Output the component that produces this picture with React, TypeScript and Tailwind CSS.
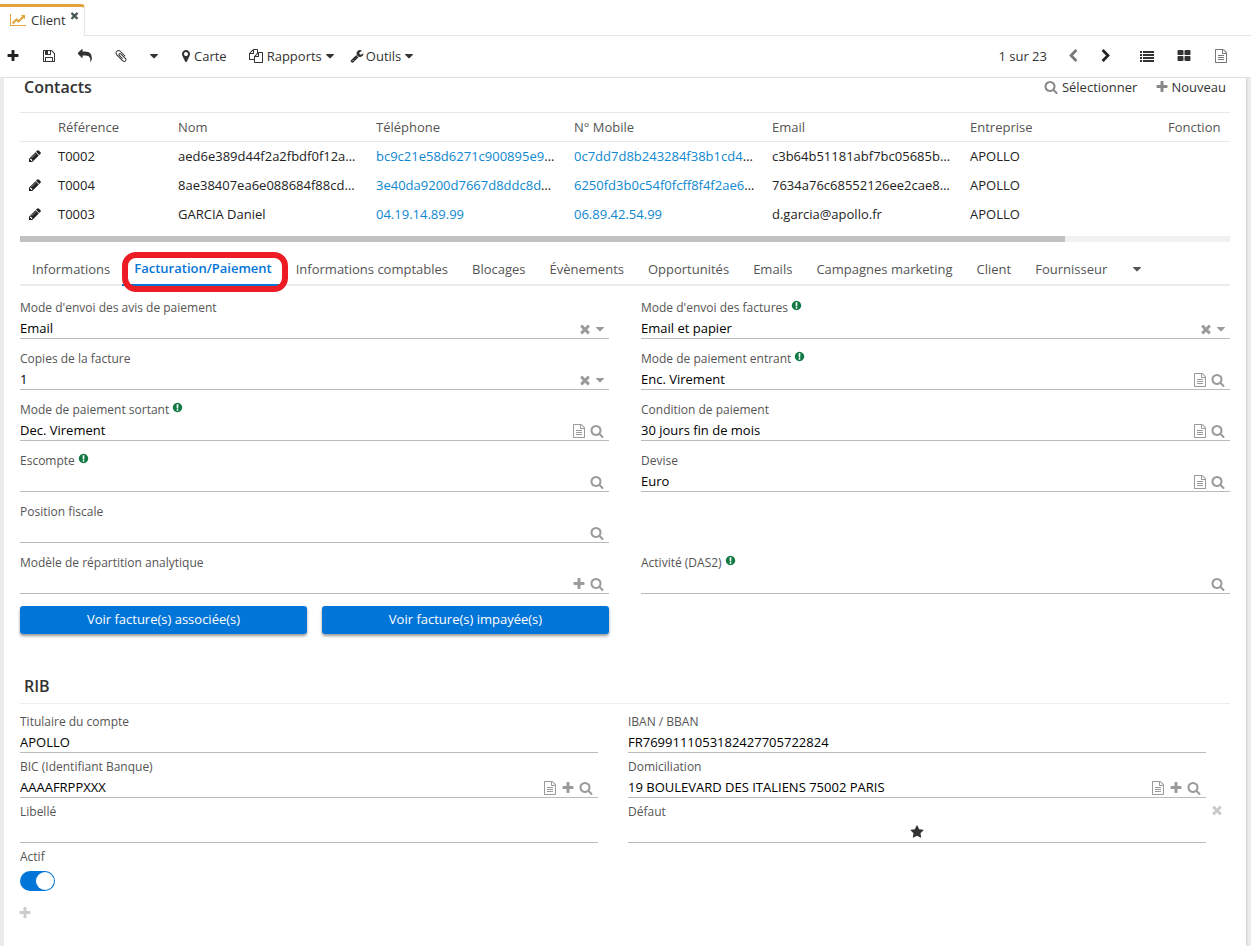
import { useId, useState } from "react"
import type { ReactNode } from "react"

// Font Awesome 4 glyphs: [viewBox, path]
const glyphs = {
    plus: ["0 0 1792 1792", "M1600 736v192q0 40-28 68t-68 28h-416v416q0 40-28 68t-68 28h-192q-40 0-68-28t-28-68v-416h-416q-40 0-68-28t-28-68v-192q0-40 28-68t68-28h416v-416q0-40 28-68t68-28h192q40 0 68 28t28 68v416h416q40 0 68 28t28 68z"],
    times: ["0 0 1792 1792", "M1490 1322q0 40-28 68l-136 136q-28 28-68 28t-68-28l-294-294-294 294q-28 28-68 28t-68-28l-136-136q-28-28-28-68t28-68l294-294-294-294q-28-28-28-68t28-68l136-136q28-28 68-28t68 28l294 294 294-294q28-28 68-28t68 28l136 136q28 28 28 68t-28 68l-294 294 294 294q28 28 28 68z"],
    search: ["0 0 1792 1792", "M1216 832q0-185-131.5-316.5t-316.5-131.5-316.5 131.5-131.5 316.5 131.5 316.5 316.5 131.5 316.5-131.5 131.5-316.5zm512 832q0 52-38 90t-90 38q-54 0-90-38l-343-342q-179 124-399 124-143 0-273.5-55.5t-225-150-150-225-55.5-273.5 55.5-273.5 150-225 225-150 273.5-55.5 273.5 55.5 225 150 150 225 55.5 273.5q0 220-124 399l343 343q37 37 37 90z"],
    caret: ["384 128 1024 1536", "M1408 704q0 26-19 45l-448 448q-19 19-45 19t-45-19l-448-448q-19-19-19-45t19-45 45-19h896q26 0 45 19t19 45z"],
    file: ["0 0 1792 1792", "M1596 380q28 28 48 76t20 88v1152q0 40-28 68t-68 28h-1344q-40 0-68-28t-28-68v-1600q0-40 28-68t68-28h896q40 0 88 20t76 48zm-444-244v376h376q-10-29-22-41l-313-313q-12-12-41-22zm384 1528v-1024h-416q-40 0-68-28t-28-68v-416h-768v1536h1280zm-1024-864q0-14 9-23t23-9h704q14 0 23 9t9 23v64q0 14-9 23t-23 9h-704q-14 0-23-9t-9-23v-64zm736 224q14 0 23 9t9 23v64q0 14-9 23t-23 9h-704q-14 0-23-9t-9-23v-64q0-14 9-23t23-9h704zm0 256q14 0 23 9t9 23v64q0 14-9 23t-23 9h-704q-14 0-23-9t-9-23v-64q0-14 9-23t23-9h704z"],
    info: ["0 0 1792 1792", "M896 128q209 0 385.5 103t279.5 279.5 103 385.5-103 385.5-279.5 279.5-385.5 103-385.5-103-279.5-279.5-103-385.5 103-385.5 279.5-279.5 385.5-103zm128 1247v-190q0-14-9-23.5t-22-9.5h-192q-13 0-23 10t-10 23v190q0 13 10 23t23 10h192q13 0 22-9.5t9-23.5zm-2-344l18-621q0-12-10-18-10-8-24-8h-220q-14 0-24 8-10 6-10 18l17 621q0 10 10 17.5t24 7.5h185q14 0 23.5-7.5t10.5-17.5z"],
    pencil: ["0 0 1792 1792", "M491 1536l91-91-235-235-91 91v107h128v128h107zm523-928q0-22-22-22-10 0-17 7l-542 542q-7 7-7 17 0 22 22 22 10 0 17-7l542-542q7-7 7-17zm-54-192l416 416-832 832h-416v-416zm683 96q0 53-37 90l-166 166-416-416 166-165q36-38 90-38 53 0 91 38l235 234q37 39 37 91z"],
    star: ["0 0 1792 1792", "M1728 647q0 22-26 48l-363 354 86 500q1 7 1 20 0 21-10.5 35.5t-30.5 14.5q-19 0-40-12l-449-236-449 236q-22 12-40 12-21 0-31.5-14.5t-10.5-35.5q0-6 2-20l86-500-364-354q-25-27-25-48 0-37 56-46l502-73 225-455q19-41 49-41t49 41l225 455 502 73q56 9 56 46z"],
    grid: ["0 0 1792 1792", "M832 1024v384q0 52-38 90t-90 38h-512q-52 0-90-38t-38-90v-384q0-52 38-90t90-38h512q52 0 90 38t38 90zm0-768v384q0 52-38 90t-90 38h-512q-52 0-90-38t-38-90v-384q0-52 38-90t90-38h512q52 0 90 38t38 90zm896 768v384q0 52-38 90t-90 38h-512q-52 0-90-38t-38-90v-384q0-52 38-90t90-38h512q52 0 90 38t38 90zm0-768v384q0 52-38 90t-90 38h-512q-52 0-90-38t-38-90v-384q0-52 38-90t90-38h512q52 0 90 38t38 90z"],
    list: ["0 0 1792 1792", "M0 256h256v256h-256zM0 640h256v256h-256zM0 1024h256v256h-256zM0 1408h256v256h-256zM384 256h1408v256h-1408zM384 640h1408v256h-1408zM384 1024h1408v256h-1408zM384 1408h1408v256h-1408z"],
    left: ["0 0 1792 1792", "M1427 301l-531 531 531 531q19 19 19 45t-19 45l-166 166q-19 19-45 19t-45-19l-742-742q-19-19-19-45t19-45l742-742q19-19 45-19t45 19l166 166q19 19 19 45t-19 45z"],
    right: ["0 0 1792 1792", "M1363 877l-742 742q-19 19-45 19t-45-19l-166-166q-19-19-19-45t19-45l531-531-531-531q-19-19-19-45t19-45l166-166q19-19 45-19t45 19l742 742q19 19 19 45t-19 45z"],
    marker: ["384 0 1024 1792", "M1152 640q0-106-75-181t-181-75-181 75-75 181 75 181 181 75 181-75 75-181zm256 0q0 109-33 179l-364 774q-16 33-47.5 52t-67.5 19-67.5-19-46.5-52l-365-774q-33-70-33-179 0-212 150-362t362-150 362 150 150 362z"],
    chart: ["-128 0 2048 1792", "M1920 1536v128h-2048v-1536h128v1408h1920zm-128-1248v435q0 21-19.5 29.5t-35.5-7.5l-121-121-633 633q-10 10-23 10t-23-10l-233-233-416 416-192-192 585-585q10-10 23-10t23 10l233 233 464-464-121-121q-16-16-7.5-35.5t29.5-19.5h435q14 0 23 9t9 23z"],
    clip: ["0 0 1792 1792", "M1596 1385q0 117-79 196t-196 79q-135 0-235-100l-777-776q-113-115-113-271 0-159 110-270t269-111q158 0 273 113l605 606q10 10 10 22 0 16-30.5 46.5t-46.5 30.5q-13 0-23-10l-606-607q-79-77-181-77-106 0-179 75t-73 181q0 105 76 181l776 777q63 63 145 63 64 0 106-42t42-106q0-82-63-145l-581-581q-26-24-60-24-29 0-48 19t-19 48q0 32 25 59l410 410q10 10 10 22 0 16-31 47t-47 31q-12 0-22-10l-410-410q-63-61-63-149 0-82 57-139t139-57q88 0 149 63l581 581q100 98 100 235z"],
    save: ["0 0 1792 1792", "M512 1536h768v-384h-768v384zm896 0h128v-896q0-14-10-38.5t-20-34.5l-281-281q-10-10-34-20t-39-10v416q0 40-28 68t-68 28h-576q-40 0-68-28t-28-68v-416h-128v1280h128v-416q0-40 28-68t68-28h832q40 0 68 28t28 68v416zm-384-928v-320q0-13-9.5-22.5t-22.5-9.5h-192q-13 0-22.5 9.5t-9.5 22.5v320q0 13 9.5 22.5t22.5 9.5h192q13 0 22.5-9.5t9.5-22.5zm640 32v928q0 40-28 68t-68 28h-1344q-40 0-68-28t-28-68v-1344q0-40 28-68t68-28h928q40 0 88 20t76 48l280 280q28 28 48 76t20 88z"],
    reply: ["0 0 1792 1792", "M1792 1120q0 166-127 451-3 7-10.5 24t-13.5 30-13 22q-12 17-28 17-15 0-23.5-10t-8.5-25q0-9 2.5-26.5t2.5-23.5q5-68 5-123 0-112-19.5-200.5t-54-153.5-88-113-116-79-143-47-164-26-184.5-7h-224v256q0 26-19 45t-45 19-45-19l-512-512q-19-19-19-45t19-45l512-512q19-19 45-19t45 19 19 45v256h224q713 0 875 403 53 134 53 333z"],
    wrench: ["0 0 1792 1792", "M448 1472q0-26-19-45t-45-19-45 19-19 45 19 45 45 19 45-19 19-45zm644-420l-682 682q-37 37-90 37-52 0-91-37l-106-108q-38-36-38-90 0-53 38-91l681-681q39 98 114.5 173.5t173.5 114.5zm634-435q0 39-23 106-47 134-164.5 217.5t-258.5 83.5q-185 0-316.5-131.5t-131.5-316.5 131.5-316.5 316.5-131.5q58 0 121.5 16.5t107.5 46.5q16 11 16 28t-16 28l-293 169v224l193 107q5-3 79-48.5t135.5-81 70.5-35.5q15 0 23.5 10t8.5 25z"],
    copy: ["0 0 1792 1792", "M1696 384q40 0 68 28t28 68v1216q0 40-28 68t-68 28h-960q-40 0-68-28t-28-68v-288h-544q-40 0-68-28t-28-68v-672q0-40 20-88t48-76l408-408q28-28 76-48t88-20h416q40 0 68 28t28 68v328q68-40 128-40h416zm-544 213l-299 299h299v-299zm-640-384l-299 299h299v-299zm196 647l316-316v-416h-384v416q0 40-28 68t-68 28h-416v640h512v-256q0-40 20-88t48-76zm956 804v-1152h-384v416q0 40-28 68t-68 28h-416v640h896z"],
}

type IconName = keyof typeof glyphs

const Icon = ({ name, className = "size-3.5" }: { name: IconName; className?: string }) => (
    <svg viewBox={glyphs[name][0]} fill="currentColor" aria-hidden="true" className={"shrink-0 " + className}>
        <path d={glyphs[name][1]} />
    </svg>
)

const Caret = () => <Icon name="caret" className="h-3 w-2" />

const IconButton = ({ name, label, className = "" }: { name: IconName; label: string; className?: string }) => (
    <button aria-label={label} className={"cursor-pointer " + className}>
        {name === "caret" ? <Caret /> : <Icon name={name} />}
    </button>
)

const actionLabels: Partial<Record<IconName, string>> = {
    times: "Effacer",
    caret: "Ouvrir la liste",
    file: "Voir",
    plus: "Créer",
    search: "Rechercher",
}

type FieldProps = {
    label: string
    value?: string
    help?: boolean
    select?: boolean
    actions?: IconName[]
    children?: ReactNode
}

const Field = ({ label, value = "", help, select, actions = [], children }: FieldProps) => {
    const id = useId()
    return (
        <div>
            <div className="flex h-5 items-center">
                <label htmlFor={id} className="text-xs leading-5 text-[#555]">{label}</label>
                {help && <span className="ml-[3px] pb-1.5 text-[#117a44]"><Icon name="info" className="size-[11px]" /></span>}
            </div>
            <div className="flex h-[21px] items-start border-b border-[#bbb] text-black">
                {children}
                {!children && select && (
                    <select id={id} defaultValue={value} className="min-w-0 flex-1 appearance-none leading-5 outline-0">
                        <option>{value}</option>
                    </select>
                )}
                {!children && !select && (
                    <input id={id} type="text" autoComplete="off" defaultValue={value} className="min-w-0 flex-1 leading-5 outline-0" />
                )}
                {actions.length > 0 && (
                    <div className="flex h-5 items-center gap-1 pt-0.5 pr-[5px] text-[#9b9b9b]">
                        {actions.map((name) => (
                            <IconButton key={name} name={name} label={actionLabels[name] ?? name} />
                        ))}
                    </div>
                )}
            </div>
        </div>
    )
}

type Contact = { ref: string; nom: string; tel: string; mobile: string; email: string; more?: string }

// long values are shortened, "more" is what follows them
const contacts: Contact[] = [
    { ref: "T0002", nom: "aed6e389d44f2a2fbdf0f12a", tel: "bc9c21e58d6271c900895e9", mobile: "0c7dd7d8b243284f38b1cd4", email: "c3b64b51181abf7bc05685b", more: "…" },
    { ref: "T0004", nom: "8ae38407ea6e088684f88cd", tel: "3e40da9200d7667d8ddc8d", mobile: "6250fd3b0c54f0fcff8f4f2ae6", email: "7634a76c68552126ee2cae8", more: "…" },
    { ref: "T0003", nom: "GARCIA Daniel", tel: "04.19.14.89.99", mobile: "06.89.42.54.99", email: "d.garcia@apollo.fr" },
]

const tabs = ["Informations", "Facturation/Paiement", "Informations comptables", "Blocages", "Évènements", "Opportunités", "Emails", "Campagnes marketing", "Client", "Fournisseur"]

const Toolbar = () => (
    <div className="flex h-[42px] items-center border-b border-[#e6e6e6] pr-[23px] pb-0.5 pl-1.5 text-[#333]">
        <div className="flex items-center gap-[22px]">
            <IconButton name="plus" label="Nouveau" className="text-[#222]" />
            <IconButton name="save" label="Enregistrer" />
            <IconButton name="reply" label="Retour" />
            <IconButton name="clip" label="Pièces jointes" />
            <IconButton name="caret" label="Plus" />
        </div>
        <button className="ml-6 flex cursor-pointer items-center gap-1">
            <Icon name="marker" className="h-3.5 w-2" />
            Carte
        </button>
        <button className="ml-[22px] flex cursor-pointer items-center gap-1">
            <Icon name="copy" />
            Rapports
            <Caret />
        </button>
        <button className="ml-4 flex cursor-pointer items-center gap-0.5">
            <Icon name="wrench" />
            <span className="mr-0.5">Outils</span>
            <Caret />
        </button>
        <div className="ml-auto flex items-center gap-[23px]">
            <span className="-mr-1">1 sur 23</span>
            <IconButton name="left" label="Précédent" className="text-[#777]" />
            <IconButton name="right" label="Suivant" className="mr-1 -ml-1 text-[#222]" />
            <IconButton name="list" label="Liste" />
            <IconButton name="grid" label="Grille" />
            <IconButton name="file" label="Formulaire" className="text-[#777]" />
        </div>
    </div>
)

const ContactsTable = () => (
    <div>
        <div className="overflow-hidden border-t border-[#e8e8e8]">
            <table className="w-full table-fixed text-left">
                <colgroup>
                    <col className="w-[30px]" />
                    <col className="w-[120px]" />
                    <col className="w-[198px]" />
                    <col className="w-[198px]" />
                    <col className="w-[198px]" />
                    <col className="w-[198px]" />
                    <col className="w-[198px]" />
                    <col />
                </colgroup>
                <thead>
                    <tr className="h-7 border-b border-[#e8e8e8] text-[#555]">
                        <th aria-label="Modifier" />
                        <th className="px-2 font-normal">Référence</th>
                        <th className="px-2 font-normal">Nom</th>
                        <th className="px-2 font-normal">Téléphone</th>
                        <th className="px-2 font-normal">N° Mobile</th>
                        <th className="px-2 font-normal">Email</th>
                        <th className="px-2 font-normal">Entreprise</th>
                        <th className="pl-2 font-normal">Fonction</th>
                    </tr>
                </thead>
                <tbody>
                    {contacts.map((c) => (
                        <tr key={c.ref} className="h-[29px] text-[#222]">
                            <td className="pl-2"><IconButton name="pencil" label="Modifier" className="block" /></td>
                            <td className="px-2">{c.ref}</td>
                            <td className="px-2 whitespace-nowrap">{c.nom}{c.more}</td>
                            <td className="px-2 whitespace-nowrap"><a href={"tel:" + c.tel} className="text-[#0d87cf]">{c.tel}</a>{c.more}</td>
                            <td className="px-2 whitespace-nowrap"><a href={"tel:" + c.mobile} className="text-[#0d87cf]">{c.mobile}</a>{c.more}</td>
                            <td className="px-2 whitespace-nowrap">{c.email}{c.more}</td>
                            <td className="px-2">APOLLO</td>
                            <td />
                        </tr>
                    ))}
                </tbody>
            </table>
        </div>
        <div className="mt-2 h-1.5 bg-[#f1f1f1]">
            <div className="h-full w-[86.4%] bg-[#c1c1c1]" />
        </div>
    </div>
)

const Tabs = () => {
    const [active, setActive] = useState("Facturation/Paiement")
    return (
        <div className="mt-3 flex h-8 border-b-2 border-[#ececec] text-[#555]">
            {tabs.map((tab) => (
                <button
                    key={tab}
                    onClick={() => setActive(tab)}
                    className={"relative -mb-0.5 cursor-pointer px-3 pb-0.5 whitespace-nowrap " + (tab === active ? "border-b-2 border-[#0275d8] font-semibold text-[#0275d8]" : "")}
                >
                    {tab}
                    {tab === "Facturation/Paiement" && <span className="absolute -top-0.5 -right-1 -bottom-2 left-0 rounded-[14px] border-6 border-[#ed1c24]" />}
                </button>
            ))}
            <IconButton name="caret" label="Autres onglets" className="ml-[14px]" />
        </div>
    )
}

const Billing = () => (
    <div className="grid grid-cols-2 gap-x-8 gap-y-2.5 pt-3">
        <Field label="Mode d'envoi des avis de paiement" value="Email" select actions={["times", "caret"]} />
        <Field label="Mode d'envoi des factures" value="Email et papier" help select actions={["times", "caret"]} />
        <Field label="Copies de la facture" value="1" select actions={["times", "caret"]} />
        <Field label="Mode de paiement entrant" value="Enc. Virement" help actions={["file", "search"]} />
        <Field label="Mode de paiement sortant" value="Dec. Virement" help actions={["file", "search"]} />
        <Field label="Condition de paiement" value="30 jours fin de mois" actions={["file", "search"]} />
        <Field label="Escompte" help actions={["search"]} />
        <Field label="Devise" value="Euro" actions={["file", "search"]} />
        <Field label="Position fiscale" actions={["search"]} />
        <div />
        <Field label="Modèle de répartition analytique" actions={["plus", "search"]} />
        <Field label="Activité (DAS2)" help actions={["search"]} />
        <div className="grid grid-cols-2 gap-[15px] pt-0.5 text-white">
            <button className="h-7 cursor-pointer rounded-[3px] bg-[#0275d8] pb-0.5 shadow-[0_2px_3px_rgba(0,0,0,0.4)]">Voir facture(s) associée(s)</button>
            <button className="h-7 cursor-pointer rounded-[3px] bg-[#0275d8] pb-0.5 shadow-[0_2px_3px_rgba(0,0,0,0.4)]">Voir facture(s) impayée(s)</button>
        </div>
    </div>
)

const Rib = () => (
    <section className="mt-9">
        <h2 className="flex h-[34px] items-center border-b border-[#ececec] px-1 pb-0.5 text-base font-semibold text-[#333]">RIB</h2>
        <div className="flex items-center pt-2">
            <div className="grid flex-1 grid-cols-2 gap-x-[30px] gap-y-1">
                <Field label="Titulaire du compte" value="APOLLO" />
                <Field label="IBAN / BBAN" value="FR7699111053182427705722824" />
                <Field label="BIC (Identifiant Banque)" value="AAAAFRPPXXX" actions={["file", "plus", "search"]} />
                <Field label="Domiciliation" value="19 BOULEVARD DES ITALIENS 75002 PARIS" actions={["file", "plus", "search"]} />
                <Field label="Libellé" />
                <Field label="Défaut">
                    <button aria-label="Défaut" className="mx-auto flex h-5 cursor-pointer items-center text-[#333]"><Icon name="star" /></button>
                </Field>
                <div>
                    <label htmlFor="actif" className="block text-xs leading-5 text-[#555]">Actif</label>
                    <input
                        id="actif"
                        type="checkbox"
                        role="switch"
                        defaultChecked
                        className="mt-1 flex h-5 w-[35px] cursor-pointer appearance-none items-center rounded-full bg-[#bbb] px-px before:size-[18px] before:rounded-full before:bg-white before:content-[''] checked:justify-end checked:bg-[#0275d8]"
                    />
                </div>
            </div>
            <IconButton name="times" label="Supprimer" className="w-6 pt-4 pl-1 text-[#ccc]" />
        </div>
        <IconButton name="plus" label="Ajouter" className="mt-[15px] -ml-0.5 text-[#ccc]" />
    </section>
)

const App = () => {
    return (
        <div className="flex min-h-screen flex-col bg-white font-['Open_Sans',sans-serif] text-[13px] leading-5">
            <nav className="flex h-9 items-end">
                <div className="flex h-8 shrink-0 items-center rounded-tr-sm border-t-3 border-r border-t-[#e2a53d] border-r-[#e6e6e6] pr-1 pb-[3px] pl-2.5 text-[#333]">
                    <Icon name="chart" className="h-3.5 w-4 text-[#e2a53d]" />
                    <span className="ml-[5px]">Client</span>
                    <button aria-label="Fermer" className="ml-[3px] cursor-pointer pb-2.5 text-[#455]"><Icon name="times" className="size-[11px]" /></button>
                </div>
                <div className="h-full flex-1 border-b border-[#e6e6e6]" />
            </nav>
            <Toolbar />
            <div className="flex flex-1 bg-[#ececec] pr-[5px] pl-1">
                <main className="min-w-0 flex-1 bg-white px-4 shadow-[1px_0_2px_rgba(0,0,0,0.12)]">
                    <div className="flex h-[34px] items-start justify-between px-1 leading-[18px] text-[#333]">
                        <h2 className="text-base leading-[18px] font-semibold">Contacts</h2>
                        <div className="flex gap-[18px]">
                            <button className="flex cursor-pointer items-center gap-1">
                                <span className="text-[#888]"><Icon name="search" /></span>
                                Sélectionner
                            </button>
                            <button className="flex cursor-pointer items-center gap-0.5">
                                <span className="text-[#888]"><Icon name="plus" /></span>
                                Nouveau
                            </button>
                        </div>
                    </div>
                    <ContactsTable />
                    <Tabs />
                    <Billing />
                    <Rib />
                </main>
            </div>
        </div>
    )
}

export default App
